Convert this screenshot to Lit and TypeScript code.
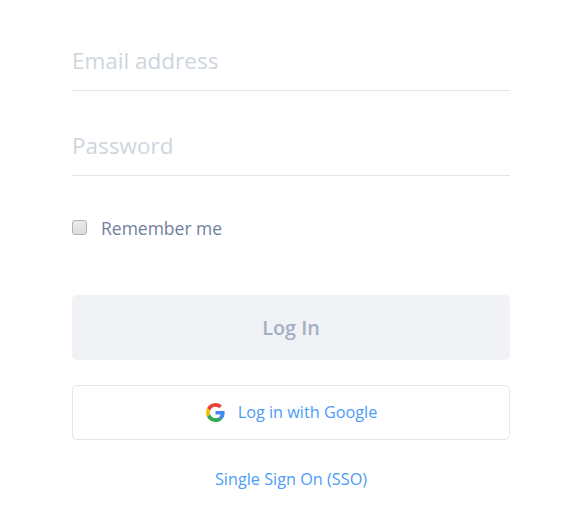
import { LitElement, html, css } from "lit";
import { customElement } from "lit/decorators.js";

@customElement("app-root")
export class AppRoot extends LitElement {
  static styles = css`
    :host { display: block; height: 506px; background: #fff; font-family: "Open Sans", sans-serif; overflow: hidden; }
    .form { display: flex; flex-direction: column; width: 438px; margin-left: 72px; padding-top: 30px; box-sizing: border-box; }
    .field { box-sizing: border-box; height: 61px; border-bottom: 1px solid #e1e7ef; font-size: 22.5px; line-height: 61px; color: #ced5de; }
    .field + .field { margin-top: 24px; }
    .remember { display: flex; align-items: center; gap: 14px; height: 24px; margin-top: 40px; font-size: 17.5px; line-height: 22px; color: #71809b; }
    .label { margin-top: -1px; }
    .box { box-sizing: border-box; width: 15px; height: 15px; border: 1px solid #b2b2b2; border-radius: 3px; background: linear-gradient(#ebebeb, #dcdcdc); margin-top: -1px; }
    .button { box-sizing: border-box; display: flex; align-items: center; justify-content: center; border-radius: 5px; }
    .login { height: 65px; margin-top: 55px; background: #f1f2f6; color: #a3afc3; font-size: 19.8px; font-weight: 600; }
    .google { height: 55px; margin-top: 25px; border: 1px solid #e1e7ef; color: #4c9cf8; font-size: 16.25px; line-height: 22px; gap: 13px; padding-left: 1px; }
    .google .label { margin-top: -2px; }
    .logo { width: 19px; height: 19px; margin-top: -1px; }
    .sso { margin-top: 28px; line-height: 22px; text-align: center; color: #4c9cf8; font-size: 16.25px; }
  `;

  render() {
    return html`<div class="form">
      <div class="field">Email address</div>
      <div class="field">Password</div>
      <div class="remember"><span class="box"></span><span class="label">Remember me</span></div>
      <div class="button login"><span>Log In</span></div>
      <div class="button google">
        <svg class="logo" viewBox="0 0 48 48">
          <path fill="#EA4335" d="M24 9.5c3.54 0 6.71 1.22 9.21 3.6l6.85-6.85C35.9 2.38 30.47 0 24 0 14.62 0 6.51 5.38 2.56 13.22l7.98 6.19C12.43 13.72 17.74 9.5 24 9.5z"/>
          <path fill="#4285F4" d="M46.98 24.55c0-1.57-.15-3.09-.38-4.55H24v9.02h12.94c-.58 2.96-2.26 5.48-4.78 7.18l7.73 6c4.51-4.18 7.09-10.36 7.09-17.65z"/>
          <path fill="#FBBC05" d="M10.53 28.59c-.48-1.45-.76-2.99-.76-4.59s.27-3.14.76-4.59l-7.98-6.19C.92 16.46 0 20.12 0 24c0 3.88.92 7.54 2.56 10.78l7.97-6.19z"/>
          <path fill="#34A853" d="M24 48c6.48 0 11.93-2.13 15.89-5.81l-7.73-6c-2.15 1.45-4.92 2.3-8.16 2.3-6.26 0-11.57-4.22-13.47-9.91l-7.98 6.19C6.51 42.62 14.62 48 24 48z"/>
        </svg>
        <span class="label">Log in with Google</span>
      </div>
      <div class="sso">Single Sign On (SSO)</div>
    </div>`;
  }
}
